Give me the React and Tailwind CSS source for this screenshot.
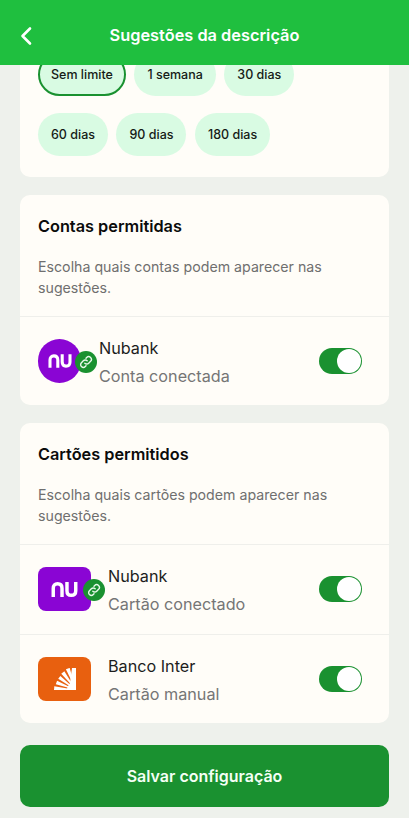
import React from "react";

const NuGlyph = ({ className }) => (
  <svg viewBox="0 0 36 20" className={className} fill="none">
    <path d="M3 20V8.500C3 4.500 5.200 2.300 8.700 2.300S14.700 4.500 14.700 8.500V20" stroke="#fff" strokeWidth="4.6" />
    <path d="M21.300 0V11.500C21.300 15.500 23.500 17.700 27 17.700S33 15.500 33 11.500V0" stroke="#fff" strokeWidth="4.6" />
  </svg>
);

const LinkBadge = ({ right }) => (
  <span className={"absolute top-[11.5px] flex h-[22px] w-[22px] items-center justify-center rounded-full bg-[#1a9130] " + right}>
    <svg viewBox="0 0 24 24" className="h-[14px] w-[14px]" fill="none" stroke="#e8f8ea" strokeWidth="2.4" strokeLinecap="round" strokeLinejoin="round">
      <path d="M10 14a4.6 4.6 0 0 0 6.6 0l3.2-3.2a4.6 4.6 0 0 0-6.6-6.6l-1.2 1.2" />
      <path d="M14 10a4.6 4.6 0 0 0-6.6 0l-3.2 3.2a4.6 4.6 0 0 0 6.6 6.6l1.2-1.2" />
    </svg>
  </span>
);

const InterFan = () => {
  const wedge = (deg, r) => {
    const a = ((deg - 5) * Math.PI) / 180;
    const b = ((deg + 5) * Math.PI) / 180;
    const p = (t, rad) => `${(22 - rad * Math.cos(t)).toFixed(2)},${(22 - rad * Math.sin(t)).toFixed(2)}`;
    return [p(a, 7), p(a, r), p(b, r), p(b, 7)].join(" ");
  };
  return (
    <svg viewBox="0 0 22 22" className="h-[22px] w-[22px]" fill="#fff">
      {[
        [5, 22],
        [21, 21],
        [37, 21],
        [53, 22],
        [69, 23],
      ].map(([d, r]) => (
        <polygon key={d} points={wedge(d, r)} />
      ))}
      <polygon points="18,0 22,0 22,22 15,22" />
      <path d="M22 22H13A9 9 0 0 1 22 13z" />
    </svg>
  );
};

const Toggle = () => (
  <div className="flex h-[26px] w-[43px] items-center justify-end rounded-full bg-[#1a9130] pr-px">
    <div className="h-[24px] w-[24px] rounded-full bg-white" />
  </div>
);

const Chip = ({ children, selected }) => (
  <div
    className={
      "flex h-[43px] items-center justify-center rounded-full bg-[#d9fbe3] pt-[2px] text-[12.5px] font-medium text-[#151a16] " +
      (selected ? "border-2 border-[#1a9130] px-[11px]" : "px-[13px]")
    }
  >
    {children}
  </div>
);

const Row = ({ icon, name, sub, gap, height }) => (
  <div className={"flex items-center justify-between border-t border-[#efefeb] pl-[18px] pr-[27px] " + height}>
    <div className={"flex items-center " + gap}>
      {icon}
      <div className="flex flex-col pt-[1.5px]">
        <span className="text-[16.2px] leading-[24px] text-[#1d1d1d]">{name}</span>
        <span className="mt-[4px] text-[16.2px] leading-[24px] text-[#757575]">{sub}</span>
      </div>
    </div>
    <Toggle />
  </div>
);

const Card = ({ title, desc, children }) => (
  <section className="mt-[18px] rounded-[10px] bg-[#fffdf8]">
    <div className="px-[18px] pb-[18px] pt-[21px]">
      <h2 className="text-[16.3px] font-semibold leading-[20px] text-[#0b0b0b]">{title}</h2>
      <p className="mt-[20px] text-[14.2px] leading-[21px] text-[#6f6f6f]">{desc}</p>
    </div>
    {children}
  </section>
);

export default function App() {
  return (
    <div className="flex h-[818px] w-[409px] flex-col overflow-hidden bg-[#eef1ec] font-['Inter',sans-serif]">
      <header className="relative z-10 flex h-[65px] shrink-0 items-center justify-center bg-[#1fbf3f] pt-[6px]">
        <svg viewBox="0 0 14 20" className="absolute left-[19px] top-[26px] h-[20px] w-[14px]" fill="none" stroke="#fff" strokeWidth="2.6" strokeLinecap="round" strokeLinejoin="round">
          <path d="M11 2.5 3.5 10l7.5 7.5" />
        </svg>
        <h1 className="text-[16.35px] font-semibold text-white">Sugestões da descrição</h1>
      </header>
      <main className="flex flex-col px-5">
        <section className="mt-[-12px] rounded-b-[10px] bg-[#fffdf8] px-[18px] pb-[21px]">
          <div className="flex flex-wrap gap-x-[8.5px] gap-y-[17px]">
            <Chip selected>Sem limite</Chip>
            <Chip>1 semana</Chip>
            <Chip>30 dias</Chip>
            <Chip>60 dias</Chip>
            <Chip>90 dias</Chip>
            <Chip>180 dias</Chip>
          </div>
        </section>
        <Card title="Contas permitidas" desc="Escolha quais contas podem aparecer nas sugestões.">
          <Row
            height="h-[89px]"
            gap="gap-[18px]"
            name="Nubank"
            sub="Conta conectada"
            icon={
              <div className="relative flex h-[44px] w-[43px] shrink-0 items-center justify-center rounded-full bg-[#8a05d4]">
                <NuGlyph className="h-[14px] w-[24px]" />
                <LinkBadge right="right-[-16px]" />
              </div>
            }
          />
        </Card>
        <Card title="Cartões permitidos" desc="Escolha quais cartões podem aparecer nas sugestões.">
          <Row
            height="h-[89.5px]"
            gap="gap-[17px]"
            name="Nubank"
            sub="Cartão conectado"
            icon={
              <div className="relative flex h-[44px] w-[53px] shrink-0 items-center justify-center rounded-[8px] bg-[#8a05d4]">
                <NuGlyph className="h-[15px] w-[27px]" />
                <LinkBadge right="right-[-14px]" />
              </div>
            }
          />
          <Row
            height="h-[89.5px]"
            gap="gap-[17px]"
            name="Banco Inter"
            sub="Cartão manual"
            icon={
              <div className="flex h-[44px] w-[53px] shrink-0 items-center justify-center rounded-[8px] bg-[#e8600f]">
                <InterFan />
              </div>
            }
          />
        </Card>
        <button className="mt-[22px] h-[62px] w-full rounded-[10px] bg-[#1a9130] text-[16px] font-semibold text-[#f4fff5]">
          Salvar configuração
        </button>
      </main>
    </div>
  );
}
